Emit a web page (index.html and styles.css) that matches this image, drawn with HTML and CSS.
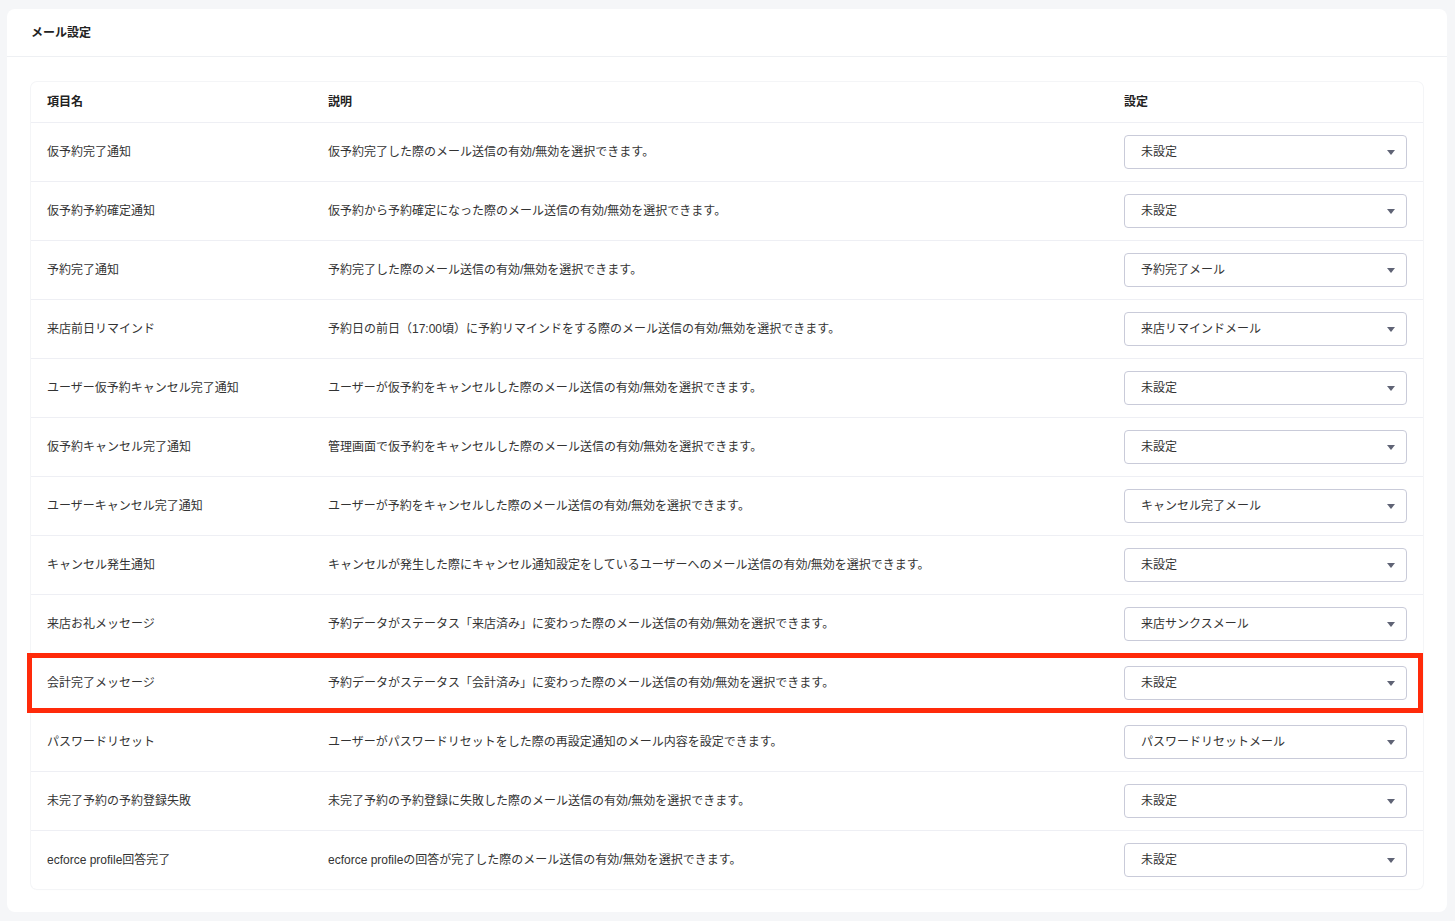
FILE: index.html
```html
<!DOCTYPE html>
<html lang="ja">

<head>
  <meta charset="UTF-8">
  <meta name="viewport" content="width=device-width, initial-scale=1.0">
  <title>メール設定</title>
  <link rel="stylesheet" href="styles.css">
</head>

<body>
  <div class="panel">
    <div class="panel-header">メール設定</div>

    <div class="panel-body">
      <div class="settings-table">
        <div class="row head">
          <div class="cell">項目名</div>
          <div class="cell">説明</div>
          <div class="cell">設定</div>
        </div>

        <div class="row">
          <div class="cell">仮予約完了通知</div>
          <div class="cell">仮予約完了した際のメール送信の有効/無効を選択できます。</div>
          <div class="cell"><div class="select"><span>未設定</span><svg width="8" height="5" viewBox="0 0 8 5"><path d="M0 0h8L4 5z" /></svg></div></div>
        </div>

        <div class="row">
          <div class="cell">仮予約予約確定通知</div>
          <div class="cell">仮予約から予約確定になった際のメール送信の有効/無効を選択できます。</div>
          <div class="cell"><div class="select"><span>未設定</span><svg width="8" height="5" viewBox="0 0 8 5"><path d="M0 0h8L4 5z" /></svg></div></div>
        </div>

        <div class="row">
          <div class="cell">予約完了通知</div>
          <div class="cell">予約完了した際のメール送信の有効/無効を選択できます。</div>
          <div class="cell"><div class="select"><span>予約完了メール</span><svg width="8" height="5" viewBox="0 0 8 5"><path d="M0 0h8L4 5z" /></svg></div></div>
        </div>

        <div class="row">
          <div class="cell">来店前日リマインド</div>
          <div class="cell">予約日の前日（17:00頃）に予約リマインドをする際のメール送信の有効/無効を選択できます。</div>
          <div class="cell"><div class="select"><span>来店リマインドメール</span><svg width="8" height="5" viewBox="0 0 8 5"><path d="M0 0h8L4 5z" /></svg></div></div>
        </div>

        <div class="row">
          <div class="cell">ユーザー仮予約キャンセル完了通知</div>
          <div class="cell">ユーザーが仮予約をキャンセルした際のメール送信の有効/無効を選択できます。</div>
          <div class="cell"><div class="select"><span>未設定</span><svg width="8" height="5" viewBox="0 0 8 5"><path d="M0 0h8L4 5z" /></svg></div></div>
        </div>

        <div class="row">
          <div class="cell">仮予約キャンセル完了通知</div>
          <div class="cell">管理画面で仮予約をキャンセルした際のメール送信の有効/無効を選択できます。</div>
          <div class="cell"><div class="select"><span>未設定</span><svg width="8" height="5" viewBox="0 0 8 5"><path d="M0 0h8L4 5z" /></svg></div></div>
        </div>

        <div class="row">
          <div class="cell">ユーザーキャンセル完了通知</div>
          <div class="cell">ユーザーが予約をキャンセルした際のメール送信の有効/無効を選択できます。</div>
          <div class="cell"><div class="select"><span>キャンセル完了メール</span><svg width="8" height="5" viewBox="0 0 8 5"><path d="M0 0h8L4 5z" /></svg></div></div>
        </div>

        <div class="row">
          <div class="cell">キャンセル発生通知</div>
          <div class="cell">キャンセルが発生した際にキャンセル通知設定をしているユーザーへのメール送信の有効/無効を選択できます。</div>
          <div class="cell"><div class="select"><span>未設定</span><svg width="8" height="5" viewBox="0 0 8 5"><path d="M0 0h8L4 5z" /></svg></div></div>
        </div>

        <div class="row">
          <div class="cell">来店お礼メッセージ</div>
          <div class="cell">予約データがステータス「来店済み」に変わった際のメール送信の有効/無効を選択できます。</div>
          <div class="cell"><div class="select"><span>来店サンクスメール</span><svg width="8" height="5" viewBox="0 0 8 5"><path d="M0 0h8L4 5z" /></svg></div></div>
        </div>

        <div class="row highlighted">
          <div class="cell">会計完了メッセージ</div>
          <div class="cell">予約データがステータス「会計済み」に変わった際のメール送信の有効/無効を選択できます。</div>
          <div class="cell"><div class="select"><span>未設定</span><svg width="8" height="5" viewBox="0 0 8 5"><path d="M0 0h8L4 5z" /></svg></div></div>
        </div>

        <div class="row">
          <div class="cell">パスワードリセット</div>
          <div class="cell">ユーザーがパスワードリセットをした際の再設定通知のメール内容を設定できます。</div>
          <div class="cell"><div class="select"><span>パスワードリセットメール</span><svg width="8" height="5" viewBox="0 0 8 5"><path d="M0 0h8L4 5z" /></svg></div></div>
        </div>

        <div class="row">
          <div class="cell">未完了予約の予約登録失敗</div>
          <div class="cell">未完了予約の予約登録に失敗した際のメール送信の有効/無効を選択できます。</div>
          <div class="cell"><div class="select"><span>未設定</span><svg width="8" height="5" viewBox="0 0 8 5"><path d="M0 0h8L4 5z" /></svg></div></div>
        </div>

        <div class="row">
          <div class="cell">ecforce profile回答完了</div>
          <div class="cell">ecforce profileの回答が完了した際のメール送信の有効/無効を選択できます。</div>
          <div class="cell"><div class="select"><span>未設定</span><svg width="8" height="5" viewBox="0 0 8 5"><path d="M0 0h8L4 5z" /></svg></div></div>
        </div>
      </div>
    </div>
  </div>
</body>

</html>
```

FILE: styles.css
```css
* {
  margin: 0;
  padding: 0;
  box-sizing: border-box;
}

body {
  font-family: 'Liberation Sans', 'Noto Sans CJK JP', sans-serif;
  font-size: 12px;
  line-height: 1;
  background: #f5f6f8;
  color: #333;
  padding: 9px 8px 8px 7px;
}

.panel {
  background: #ffffff;
  border-radius: 8px;
}

.panel-header {
  height: 48px;
  display: flex;
  align-items: center;
  padding: 0 24px;
  font-weight: 700;
  color: #222;
  border-bottom: 1px solid #eef0f3;
}

.panel-body {
  padding: 25px 24px 23px;
}

.settings-table {
  border-radius: 6px;
  box-shadow: 0 0 0 1px #f4f5f7, 0 1px 2px rgba(0, 0, 0, 0.02);
}

.row {
  display: grid;
  grid-template-columns: 281px 1fr 315px;
  align-items: center;
  height: 59px;
  border-top: 1px solid #eeeff4;
}

.row.head {
  height: 40px;
  border-top: none;
  font-weight: 700;
  color: #222;
}

.cell {
  padding: 0 16px;
  white-space: nowrap;
}

.select {
  display: flex;
  align-items: center;
  justify-content: space-between;
  height: 34px;
  padding: 0 11px 0 16px;
  border: 1px solid #c9cbd9;
  border-radius: 4px;
  background: #fff;
  color: #333;
}

.select svg {
  fill: #5f6375;
}

.highlighted {
  position: relative;
}

.highlighted::after {
  content: '';
  position: absolute;
  top: -1px;
  right: 0;
  bottom: -1px;
  left: -4px;
  border: 5px solid #ff2a0a;
  pointer-events: none;
}
```
